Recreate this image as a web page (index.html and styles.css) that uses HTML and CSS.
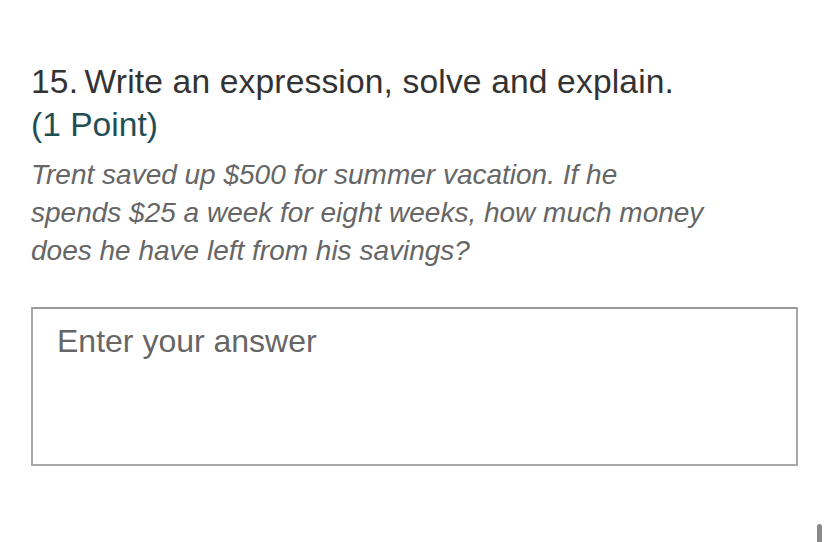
FILE: index.html
```html
<!DOCTYPE html>
<html>
<head>
<meta charset="utf-8">
<link rel="stylesheet" href="styles.css">
</head>
<body>
<div class="page">
  <div class="question">
    <div class="title"><span class="num">15.</span> Write an expression, solve and explain.</div>
    <div class="points">(1 Point)</div>
    <div class="desc">Trent saved up $500 for summer vacation. If he<br>spends $25 a week for eight weeks, how much money<br>does he have left from his savings?</div>
  </div>
  <div class="answer"><span class="placeholder">Enter your answer</span></div>
</div>
<div class="scroll"></div>
</body>
</html>
```
FILE: styles.css
```css
html, body {
  margin: 0;
  padding: 0;
  background: #fff;
  width: 828px;
  height: 542px;
  overflow: hidden;
}
.page {
  padding: 60px 31px 0 31px;
  font-family: "Liberation Sans", Arial, sans-serif;
}
.title {
  font-size: 33.6px;
  line-height: 43px;
  color: #333;
  letter-spacing: 0.15px;
}
.num {
  margin-right: -3px;
}
.points {
  font-size: 33.6px;
  line-height: 43px;
  color: #1f4f55;
}
.desc {
  margin-top: 10px;
  font-size: 28px;
  line-height: 38px;
  font-style: italic;
  color: #666;
}
.answer {
  margin-top: 37px;
  width: 767px;
  height: 159px;
  border: 2px solid #a8a8a8;
  border-top-color: #999;
  box-sizing: border-box;
  padding: 14px 24px;
}
.placeholder {
  font-size: 32px;
  line-height: 36px;
  color: #666;
}
.scroll {
  position: absolute;
  left: 817px;
  top: 524px;
  width: 5px;
  height: 20px;
  border-radius: 3px;
  background: #8a8a8a;
}
```
